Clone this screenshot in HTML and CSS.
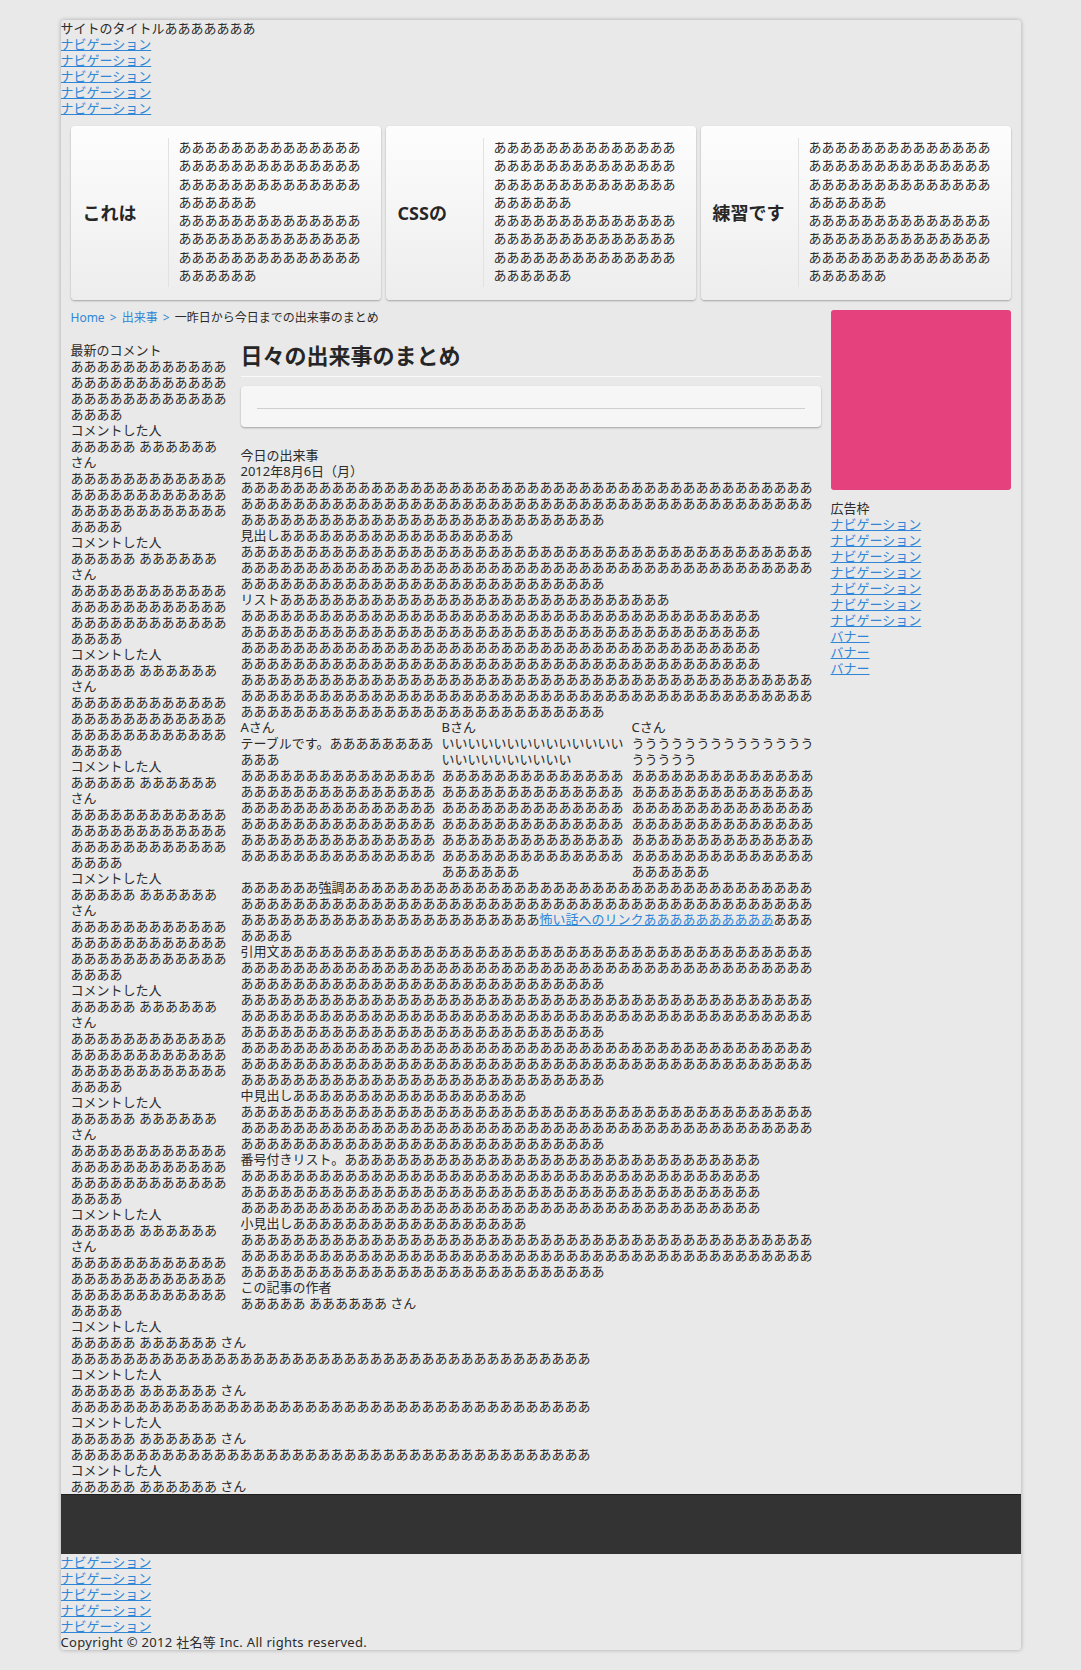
FILE: index.html
```html
<!DOCTYPE html>
<html lang="ja">
<head>
<meta charset="utf-8">
<title>サイトのタイトル</title>
<link rel="stylesheet" href="styles.css">
</head>
<body>
<div class="page">
  <header class="site-header">
    <p class="site-title">サイトのタイトルあああああああ</p>
    <nav>
      <ul class="nav-list">
        <li><a href="#">ナビゲーション</a></li>
        <li><a href="#">ナビゲーション</a></li>
        <li><a href="#">ナビゲーション</a></li>
        <li><a href="#">ナビゲーション</a></li>
        <li><a href="#">ナビゲーション</a></li>
      </ul>
    </nav>
  </header>

  <section class="features">
    <div class="feature">
      <h2 class="feature-title">これは</h2>
      <div class="feature-text">
        <p>ああああああああああああああああああああああああああああああああああああああああああああああああ</p>
        <p>ああああああああああああああああああああああああああああああああああああああああああああああああ</p>
      </div>
    </div>
    <div class="feature">
      <h2 class="feature-title">CSSの</h2>
      <div class="feature-text">
        <p>ああああああああああああああああああああああああああああああああああああああああああああああああ</p>
        <p>ああああああああああああああああああああああああああああああああああああああああああああああああ</p>
      </div>
    </div>
    <div class="feature">
      <h2 class="feature-title">練習です</h2>
      <div class="feature-text">
        <p>ああああああああああああああああああああああああああああああああああああああああああああああああ</p>
        <p>ああああああああああああああああああああああああああああああああああああああああああああああああ</p>
      </div>
    </div>
  </section>

  <div class="content">
    <div class="content-main">
      <p class="breadcrumb"><a href="#">Home &gt;</a> <a href="#">出来事 &gt;</a> 一昨日から今日までの出来事のまとめ</p>
      <div class="columns">
        <article class="article">
          <h1 class="article-title">日々の出来事のまとめ</h1>
          <div class="article-tools"><hr class="tools-rule"></div>
          <div class="article-body">
            <h2>今日の出来事</h2>
            <p>2012年8月6日（月）</p>
            <p>ああああああああああああああああああああああああああああああああああああああああああああああああああああああああああああああああああああああああああああああああああああああああああああああああああああああああああああああああああああ</p>
            <h3>見出しああああああああああああああああああ</h3>
            <p>ああああああああああああああああああああああああああああああああああああああああああああああああああああああああああああああああああああああああああああああああああああああああああああああああああああああああああああああああああああ</p>
            <p>リストああああああああああああああああああああああああああああああ</p>
            <ul class="plain-list">
              <li>ああああああああああああああああああああああああああああああああああああああああ</li>
              <li>ああああああああああああああああああああああああああああああああああああああああ</li>
              <li>ああああああああああああああああああああああああああああああああああああああああ</li>
              <li>ああああああああああああああああああああああああああああああああああああああああ</li>
            </ul>
            <p>ああああああああああああああああああああああああああああああああああああああああああああああああああああああああああああああああああああああああああああああああああああああああああああああああああああああああああああああああああああ</p>
            <table class="data-table">
              <colgroup><col class="col-a"><col class="col-b"><col class="col-c"></colgroup>
              <thead>
                <tr><th>Aさん</th><th>Bさん</th><th>Cさん</th></tr>
              </thead>
              <tbody>
                <tr>
                  <td>テーブルです。あああああああああああ</td>
                  <td>いいいいいいいいいいいいいいいいいいいいいいいい</td>
                  <td>ううううううううううううううううううう</td>
                </tr>
                <tr>
                  <td>ああああああああああああああああああああああああああああああああああああああああああああああああああああああああああああああああああああああああああああああああああああああああああ</td>
                  <td>ああああああああああああああああああああああああああああああああああああああああああああああああああああああああああああああああああああああああああああああああああああああああああ</td>
                  <td>ああああああああああああああああああああああああああああああああああああああああああああああああああああああああああああああああああああああああああああああああああああああああああ</td>
                </tr>
              </tbody>
            </table>
            <p>ああああああ<strong>強調</strong>あああああああああああああああああああああああああああああああああああああああああああああああああああああああああああああああああああああああああああああああああああああああああああああああああああああああ<a href="#">怖い話へのリンクああああああああああ</a>あああああああ</p>
            <blockquote>
              <p>引用文あああああああああああああああああああああああああああああああああああああああああああああああああああああああああああああああああああああああああああああああああああああああああああああああああああああああああああああああああ</p>
              <p>ああああああああああああああああああああああああああああああああああああああああああああああああああああああああああああああああああああああああああああああああああああああああああああああああああああああああああああああああああああ</p>
              <p>ああああああああああああああああああああああああああああああああああああああああああああああああああああああああああああああああああああああああああああああああああああああああああああああああああああああああああああああああああああ</p>
            </blockquote>
            <h3>中見出しああああああああああああああああああ</h3>
            <p>ああああああああああああああああああああああああああああああああああああああああああああああああああああああああああああああああああああああああああああああああああああああああああああああああああああああああああああああああああああ</p>
            <ol class="plain-list">
              <li>番号付きリスト。ああああああああああああああああああああああああああああああああ</li>
              <li>ああああああああああああああああああああああああああああああああああああああああ</li>
              <li>ああああああああああああああああああああああああああああああああああああああああ</li>
              <li>ああああああああああああああああああああああああああああああああああああああああ</li>
            </ol>
            <h4>小見出しああああああああああああああああああ</h4>
            <p>ああああああああああああああああああああああああああああああああああああああああああああああああああああああああああああああああああああああああああああああああああああああああああああああああああああああああああああああああああああ</p>
            <p>この記事の作者</p>
            <p>あああああ ああああああ さん</p>
          </div>
        </article>

        <section class="comments">
          <h2>最新のコメント</h2>
          <div class="comment"><p>ああああああああああああああああああああああああああああああああああああああああ</p><p>コメントした人</p><p>あああああ ああああああ さん</p></div>
          <div class="comment"><p>ああああああああああああああああああああああああああああああああああああああああ</p><p>コメントした人</p><p>あああああ ああああああ さん</p></div>
          <div class="comment"><p>ああああああああああああああああああああああああああああああああああああああああ</p><p>コメントした人</p><p>あああああ ああああああ さん</p></div>
          <div class="comment"><p>ああああああああああああああああああああああああああああああああああああああああ</p><p>コメントした人</p><p>あああああ ああああああ さん</p></div>
          <div class="comment"><p>ああああああああああああああああああああああああああああああああああああああああ</p><p>コメントした人</p><p>あああああ ああああああ さん</p></div>
          <div class="comment"><p>ああああああああああああああああああああああああああああああああああああああああ</p><p>コメントした人</p><p>あああああ ああああああ さん</p></div>
          <div class="comment"><p>ああああああああああああああああああああああああああああああああああああああああ</p><p>コメントした人</p><p>あああああ ああああああ さん</p></div>
          <div class="comment"><p>ああああああああああああああああああああああああああああああああああああああああ</p><p>コメントした人</p><p>あああああ ああああああ さん</p></div>
          <div class="comment"><p>ああああああああああああああああああああああああああああああああああああああああ</p><p>コメントした人</p><p>あああああ ああああああ さん</p></div>
          <div class="comment"><p>ああああああああああああああああああああああああああああああああああああああああ</p><p>コメントした人</p><p>あああああ ああああああ さん</p></div>
          <div class="comment"><p>ああああああああああああああああああああああああああああああああああああああああ</p><p>コメントした人</p><p>あああああ ああああああ さん</p></div>
          <div class="comment"><p>ああああああああああああああああああああああああああああああああああああああああ</p><p>コメントした人</p><p>あああああ ああああああ さん</p></div>
        </section>
      </div>
    </div>

    <aside class="sidebar">
      <div class="ad-box"></div>
      <p class="ad-label">広告枠</p>
      <ul class="nav-list">
        <li><a href="#">ナビゲーション</a></li>
        <li><a href="#">ナビゲーション</a></li>
        <li><a href="#">ナビゲーション</a></li>
        <li><a href="#">ナビゲーション</a></li>
        <li><a href="#">ナビゲーション</a></li>
        <li><a href="#">ナビゲーション</a></li>
        <li><a href="#">ナビゲーション</a></li>
        <li><a href="#">バナー</a></li>
        <li><a href="#">バナー</a></li>
        <li><a href="#">バナー</a></li>
      </ul>
    </aside>
  </div>

  <div class="footer-bar"></div>
  <footer class="site-footer">
    <ul class="nav-list">
      <li><a href="#">ナビゲーション</a></li>
      <li><a href="#">ナビゲーション</a></li>
      <li><a href="#">ナビゲーション</a></li>
      <li><a href="#">ナビゲーション</a></li>
      <li><a href="#">ナビゲーション</a></li>
    </ul>
    <p class="copyright">Copyright © 2012 社名等 Inc. All rights reserved.</p>
  </footer>
</div>
</body>
</html>
```

FILE: styles.css
```css
* {
  margin: 0;
  padding: 0;
  box-sizing: border-box;
}

html, body {
  background: #e9e9e9;
}

body {
  font-family: "Noto Sans", "Noto Sans CJK JP", sans-serif;
  font-size: 13px;
  line-height: 16px;
  color: #2b2b2b;
}

a {
  color: #2f86d6;
}

.page {
  width: 960px;
  margin: 20px auto;
  background: #e9e9e9;
  border-radius: 3px;
  box-shadow: 0 0 4px rgba(0, 0, 0, 0.28);
  overflow: hidden;
}

.site-title {
  font-weight: normal;
}

.nav-list {
  list-style: none;
}

/* features */
.features {
  display: flex;
  gap: 5px;
  margin: 10px 10px;
}

.feature {
  width: 310px;
  display: flex;
  align-items: stretch;
  padding: 12px 0 13px;
  border-radius: 4px;
  background: linear-gradient(#fdfdfd, #ededed);
  box-shadow: 0 1px 2px rgba(0, 0, 0, 0.3);
}

.feature-title {
  width: 97px;
  flex: none;
  padding-left: 12px;
  display: flex;
  align-items: center;
  font-size: 18px;
  line-height: 24px;
  font-weight: bold;
  color: #262626;
}

.feature-text {
  flex: 1;
  border-left: 1px solid #e2e2e2;
  padding: 0 14px 3px 10px;
  line-height: 18.3px;
}

/* content */
.content {
  display: flex;
  gap: 10px;
  padding: 0 10px;
}

.content-main {
  width: 750px;
  flex: none;
}

.breadcrumb {
  font-size: 12px;
  line-height: 16px;
  margin-bottom: 16px;
  word-spacing: 2px;
}

.breadcrumb a {
  text-decoration: none;
}

.article {
  float: right;
  width: 580px;
  margin-left: 10px;
}

.article-title {
  font-size: 22px;
  line-height: 26px;
  font-weight: bold;
  color: #262626;
  padding-bottom: 8px;
  border-bottom: 1px solid #fafafa;
}

.article-tools {
  margin-top: 9px;
  padding: 22px 16px 18px;
  background: #f6f6f6;
  border-radius: 4px;
  box-shadow: 0 1px 2px rgba(0, 0, 0, 0.3);
}

.tools-rule {
  border: 0;
  border-top: 1px solid #cfcfcf;
  height: 0;
}

.article-body {
  margin-top: 20px;
}

.article-body h2,
.article-body h3,
.article-body h4,
.comments h2 {
  font-size: 13px;
  font-weight: normal;
}

.article-body strong {
  font-weight: normal;
}

.plain-list {
  list-style: none;
}

.data-table {
  width: 580px;
  table-layout: fixed;
  border-collapse: collapse;
}

.col-a { width: 201px; }
.col-b { width: 190px; }
.col-c { width: 189px; }

.data-table th,
.data-table td {
  padding: 0;
  text-align: left;
  vertical-align: top;
  font-weight: normal;
}

/* right sidebar */
.sidebar {
  width: 180px;
  flex: none;
}

.ad-box {
  width: 180px;
  height: 180px;
  background: #e5417c;
  border-radius: 3px;
}

.ad-label {
  margin-top: 10px;
}

/* footer */
.footer-bar {
  height: 60px;
  background: #333;
  border-top: 1px solid #1f1f1f;
}

.copyright {
  letter-spacing: 0.3px;
}
```
